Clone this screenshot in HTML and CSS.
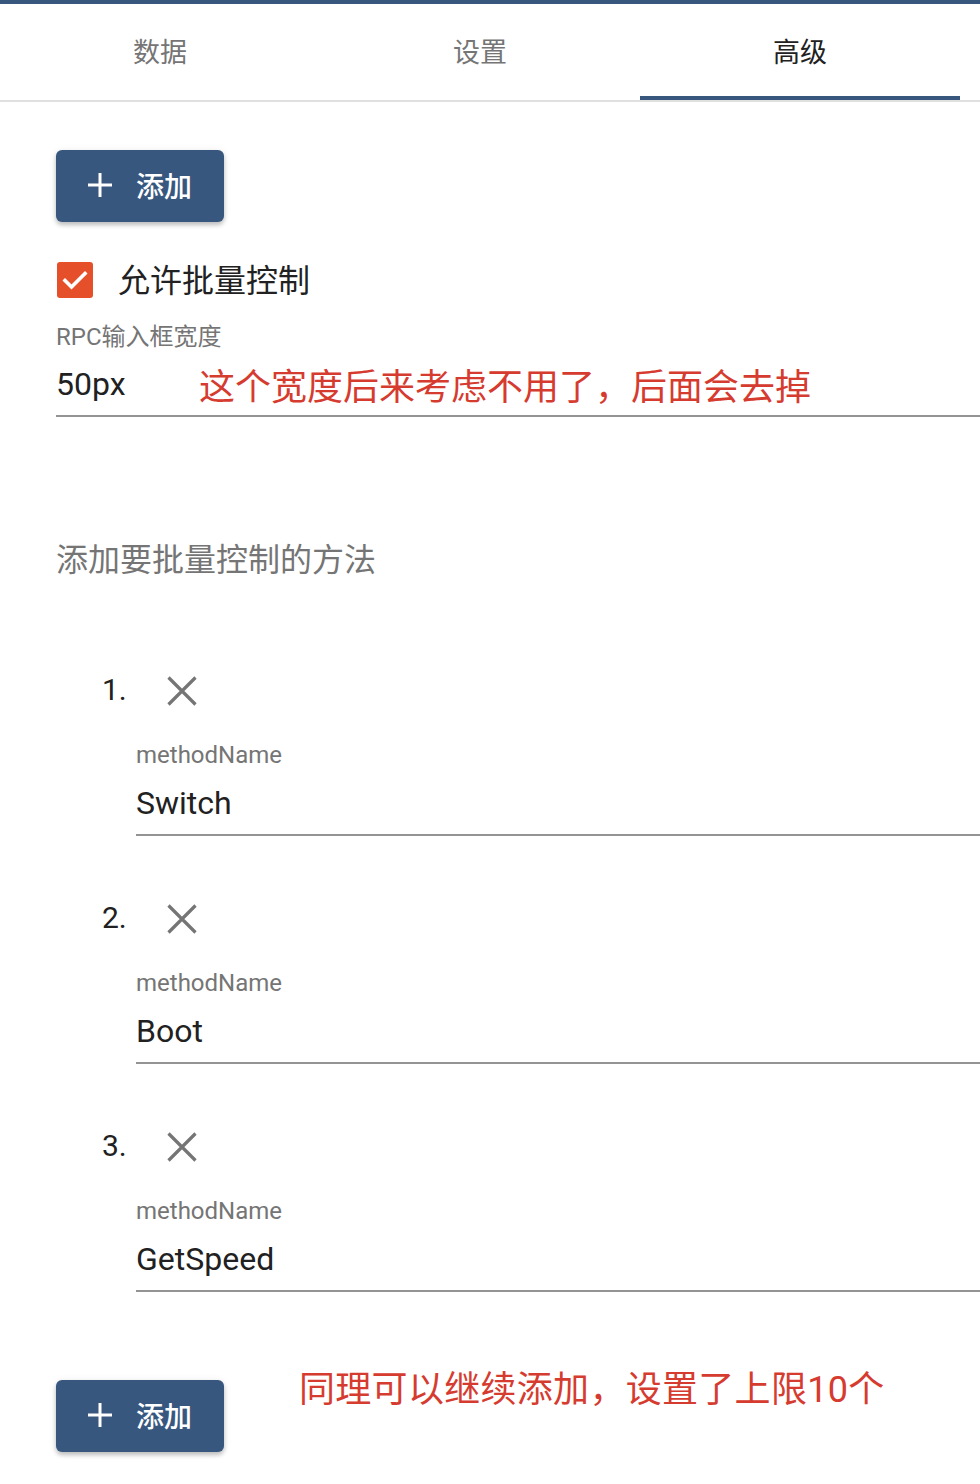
FILE: index.html
```html
<!DOCTYPE html>
<html lang="zh-CN">
<head>
<meta charset="utf-8">
<title>高级</title>
<link rel="stylesheet" href="styles.css">
</head>
<body>
<nav class="tabs">
  <div class="tab">数据</div>
  <div class="tab">设置</div>
  <div class="tab active">高级</div>
</nav>
<main class="content">
  <button class="btn-add" type="button">
    <svg class="plus" viewBox="0 0 24 24" width="24" height="24"><path d="M12 0v24M0 12h24" stroke="#fff" stroke-width="3" fill="none"/></svg>
    <span>添加</span>
  </button>

  <label class="check-row">
    <span class="checkbox">
      <svg viewBox="0 0 36 36" width="36" height="36"><path d="M8 18.5l6.5 6.5L28 11.5" stroke="#fff" stroke-width="3.6" fill="none" stroke-linecap="square"/></svg>
    </span>
    <span class="check-label">允许批量控制</span>
  </label>

  <div class="field">
    <div class="field-label">RPC输入框宽度</div>
    <div class="field-input">
      <span class="value value-fixed">50px</span>
      <span class="note">这个宽度后来考虑不用了，后面会去掉</span>
    </div>
  </div>

  <h2 class="section-title">添加要批量控制的方法</h2>

  <ol class="methods">
    <li class="method">
      <div class="method-head"><span class="num">1.</span>
        <svg class="close" viewBox="0 0 30 30" width="30" height="30"><path d="M1.5 1.5l27 27M28.5 1.5l-27 27" stroke="#757575" stroke-width="3.2" fill="none"/></svg>
      </div>
      <div class="field method-field">
        <div class="field-label">methodName</div>
        <div class="field-input method-input"><span class="value">Switch</span></div>
      </div>
    </li>
    <li class="method">
      <div class="method-head"><span class="num">2.</span>
        <svg class="close" viewBox="0 0 30 30" width="30" height="30"><path d="M1.5 1.5l27 27M28.5 1.5l-27 27" stroke="#757575" stroke-width="3.2" fill="none"/></svg>
      </div>
      <div class="field method-field">
        <div class="field-label">methodName</div>
        <div class="field-input method-input"><span class="value">Boot</span></div>
      </div>
    </li>
    <li class="method">
      <div class="method-head"><span class="num">3.</span>
        <svg class="close" viewBox="0 0 30 30" width="30" height="30"><path d="M1.5 1.5l27 27M28.5 1.5l-27 27" stroke="#757575" stroke-width="3.2" fill="none"/></svg>
      </div>
      <div class="field method-field">
        <div class="field-label">methodName</div>
        <div class="field-input method-input"><span class="value">GetSpeed</span></div>
      </div>
    </li>
  </ol>

  <div class="bottom-row">
    <button class="btn-add" type="button">
      <svg class="plus" viewBox="0 0 24 24" width="24" height="24"><path d="M12 0v24M0 12h24" stroke="#fff" stroke-width="3" fill="none"/></svg>
      <span>添加</span>
    </button>
    <span class="note note-bottom">同理可以继续添加，设置了上限10个</span>
  </div>
</main>
</body>
</html>
```

FILE: styles.css
```css
* { box-sizing: border-box; }

html, body {
  margin: 0;
  padding: 0;
  background: #ffffff;
}

body {
  width: 980px;
  height: 1484px;
  overflow: hidden;
  border-top: 4px solid #38577f;
  font-family: Roboto, "Noto Sans CJK SC", sans-serif;
  color: #212121;
}

.tabs {
  display: flex;
  height: 98px;
  border-bottom: 2px solid #e0e0e0;
}

.tab {
  position: relative;
  width: 320px;
  height: 96px;
  padding-bottom: 4px;
  display: flex;
  align-items: center;
  justify-content: center;
  font-size: 27px;
  color: #757575;
}

.tab.active {
  color: #212121;
}

.tab.active::after {
  content: "";
  position: absolute;
  left: 0;
  right: 0;
  bottom: 0;
  height: 4px;
  background: #38577f;
}

.content {
  padding-left: 56px;
}

.btn-add {
  display: flex;
  align-items: center;
  gap: 24px;
  width: 168px;
  height: 72px;
  margin: 48px 0 0 0;
  padding: 0 0 2px 32px;
  border: none;
  border-radius: 6px;
  background: #38577f;
  color: #ffffff;
  font-family: Roboto, "Noto Sans CJK SC", sans-serif;
  font-size: 28px;
  font-weight: 500;
  box-shadow: 0 3px 4px rgba(0, 0, 0, 0.22), 0 1px 8px rgba(0, 0, 0, 0.08);
}

.plus {
  display: block;
  flex: none;
}

.check-row {
  display: flex;
  align-items: center;
  height: 36px;
  margin-top: 40px;
}

.checkbox {
  width: 36px;
  height: 36px;
  margin-left: 1px;
  border-radius: 3px;
  background: #e5502a;
  display: block;
}

.checkbox svg { display: block; }

.check-label {
  margin-left: 25px;
  margin-top: -5px;
  font-size: 32px;
  color: #212121;
}

.field {
  margin-top: 25px;
}

.field-label {
  height: 28px;
  line-height: 28px;
  font-size: 24px;
  color: #757575;
}

.field-input {
  display: flex;
  align-items: center;
  height: 66px;
  padding-top: 2px;
  border-bottom: 2px solid #949494;
}

.value {
  font-size: 32px;
  color: #212121;
}

.value-fixed {
  width: 143px;
  flex: none;
}

.note {
  font-size: 36px;
  color: #d63b2f;
  white-space: nowrap;
}

.section-title {
  margin: 123px 0 0 0;
  height: 40px;
  line-height: 40px;
  font-size: 32px;
  font-weight: 400;
  color: #757575;
}

.methods {
  list-style: none;
  margin: 0;
  padding: 0;
}

.method {
  margin-top: 62px;
}

.method:first-child {
  margin-top: 90px;
}

.method-head {
  display: flex;
  align-items: center;
  height: 40px;
  padding-left: 46px;
}

.num {
  width: 65px;
  margin-top: -2px;
  font-size: 30px;
  color: #212121;
}

.close {
  display: block;
  margin-top: 2px;
}

.method-field {
  margin-top: 31px;
  padding-left: 80px;
}

.method-input {
  height: 67px;
}

.bottom-row {
  display: flex;
  align-items: flex-start;
  margin-top: 40px;
}

.bottom-row .btn-add {
  margin-top: 48px;
}

.note-bottom {
  margin-left: 75px;
  margin-top: 36px;
  line-height: 44px;
  letter-spacing: 0.3px;
}
```
